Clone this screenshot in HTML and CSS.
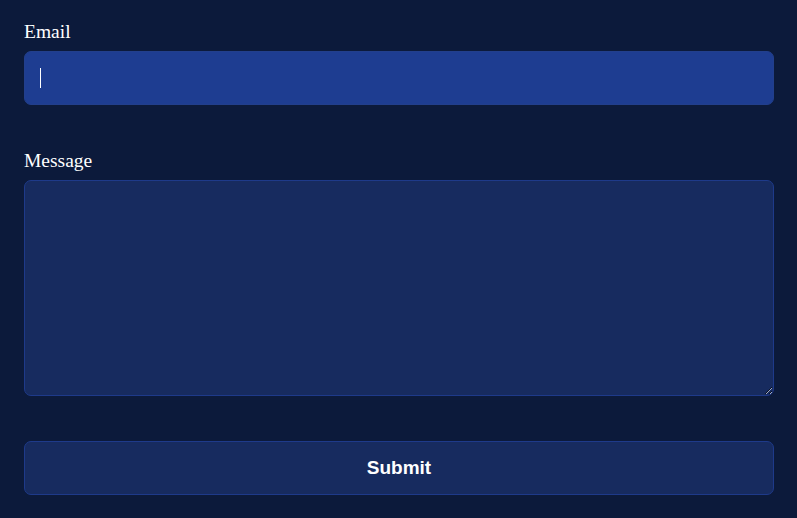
FILE: index.html
```html
<!DOCTYPE html>
<html>
<head>
<meta charset="utf-8">
<link rel="stylesheet" href="styles.css">
</head>
<body>
<form class="form">
  <div class="field">
    <label class="label" for="email">Email</label>
    <div class="input-wrap">
      <input class="input input-focus" id="email" type="email">
      <span class="caret"></span>
    </div>
  </div>
  <div class="field">
    <label class="label" for="msg">Message</label>
    <textarea class="input textarea" id="msg"></textarea>
  </div>
  <button class="submit" type="button">Submit</button>
</form>
</body>
</html>
```
FILE: styles.css
```css
html, body {
  margin: 0;
  padding: 0;
  background: #0c1a3b;
  height: 100%;
}
.form {
  padding: 21px 24px 0 24px;
  display: flex;
  flex-direction: column;
  gap: 45px;
}
.field {
  display: flex;
  flex-direction: column;
}
.label {
  font-family: "Liberation Serif", serif;
  font-size: 19.5px;
  line-height: 22px;
  color: #ffffff;
  margin-bottom: 8px;
}
.input-wrap {
  position: relative;
}
.caret {
  position: absolute;
  left: 16px;
  top: 17px;
  width: 1px;
  height: 20px;
  background: #ffffff;
}
.input {
  box-sizing: border-box;
  display: block;
  width: 750px;
  height: 54px;
  margin: 0;
  padding: 0 15px;
  border: 1px solid #1e3a8a;
  border-radius: 7px;
  background: #172b5f;
  color: #ffffff;
  caret-color: #ffffff;
  font-family: "Liberation Sans", sans-serif;
  font-size: 18px;
  outline: none;
}
.input-focus {
  background: #1e3d91;
  border-color: #223f8c;
}
.textarea {
  height: 216px;
  resize: vertical;
  padding: 12px 15px;
}
.submit {
  box-sizing: border-box;
  width: 750px;
  height: 54px;
  margin-top: 0;
  border: 1px solid #1e3a8a;
  border-radius: 7px;
  background: #172b5f;
  color: #ffffff;
  font-family: "Liberation Sans", sans-serif;
  font-weight: bold;
  font-size: 19px;
  cursor: pointer;
}
```
